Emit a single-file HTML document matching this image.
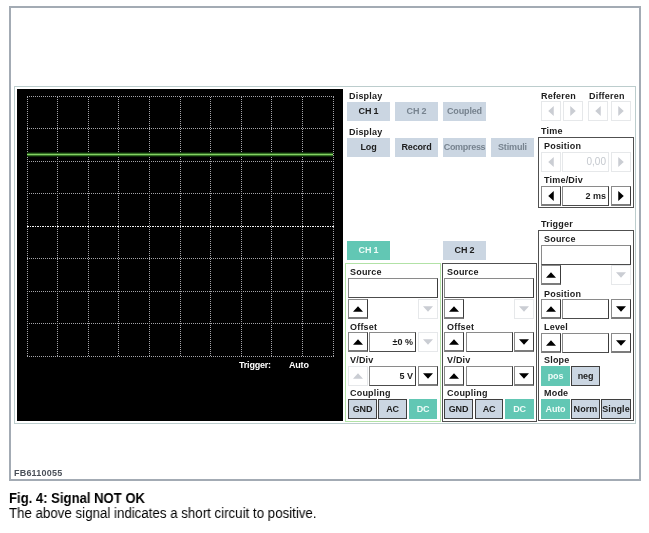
<!DOCTYPE html>
<html><head><meta charset="utf-8"><style>
html,body{margin:0;padding:0;background:#fff;}
body{width:649px;height:533px;position:relative;overflow:hidden;font-family:"Liberation Sans", sans-serif;}
div{will-change:transform}
</style></head><body>
<div style="position:absolute;left:9px;top:6px;width:632px;height:475px;box-sizing:border-box;border:2px solid #a3abb4"></div><div style="position:absolute;left:14px;top:86px;width:622px;height:338px;box-sizing:border-box;border:1px solid #bccdcd"></div><div style="position:absolute;left:17px;top:89px;width:326px;height:332px;box-sizing:border-box;background:#000"></div>
<svg style="position:absolute;left:0;top:0" width="649" height="533" viewBox="0 0 649 533"><line x1="27.5" y1="96" x2="27.5" y2="357" stroke="#a4a4a8" stroke-width="1" stroke-dasharray="1,1" stroke-dashoffset="1"/><line x1="57.5" y1="96" x2="57.5" y2="357" stroke="#a4a4a8" stroke-width="1" stroke-dasharray="1,1" stroke-dashoffset="1"/><line x1="88.5" y1="96" x2="88.5" y2="357" stroke="#a4a4a8" stroke-width="1" stroke-dasharray="1,1" stroke-dashoffset="1"/><line x1="118.5" y1="96" x2="118.5" y2="357" stroke="#a4a4a8" stroke-width="1" stroke-dasharray="1,1" stroke-dashoffset="1"/><line x1="149.5" y1="96" x2="149.5" y2="357" stroke="#a4a4a8" stroke-width="1" stroke-dasharray="1,1" stroke-dashoffset="1"/><line x1="180.5" y1="96" x2="180.5" y2="357" stroke="#a4a4a8" stroke-width="1" stroke-dasharray="1,1" stroke-dashoffset="1"/><line x1="210.5" y1="96" x2="210.5" y2="357" stroke="#a4a4a8" stroke-width="1" stroke-dasharray="1,1" stroke-dashoffset="1"/><line x1="241.5" y1="96" x2="241.5" y2="357" stroke="#a4a4a8" stroke-width="1" stroke-dasharray="1,1" stroke-dashoffset="1"/><line x1="271.5" y1="96" x2="271.5" y2="357" stroke="#a4a4a8" stroke-width="1" stroke-dasharray="1,1" stroke-dashoffset="1"/><line x1="302.5" y1="96" x2="302.5" y2="357" stroke="#a4a4a8" stroke-width="1" stroke-dasharray="1,1" stroke-dashoffset="1"/><line x1="333.5" y1="96" x2="333.5" y2="357" stroke="#a4a4a8" stroke-width="1" stroke-dasharray="1,1" stroke-dashoffset="1"/><line x1="27" y1="96.5" x2="334" y2="96.5" stroke="#a4a4a8" stroke-width="1" stroke-dasharray="1,1"/><line x1="27" y1="128.5" x2="334" y2="128.5" stroke="#a4a4a8" stroke-width="1" stroke-dasharray="1,1"/><line x1="27" y1="161.5" x2="334" y2="161.5" stroke="#a4a4a8" stroke-width="1" stroke-dasharray="1,1"/><line x1="27" y1="193.5" x2="334" y2="193.5" stroke="#a4a4a8" stroke-width="1" stroke-dasharray="1,1"/><line x1="27" y1="226.5" x2="334" y2="226.5" stroke="#f4f4f4" stroke-width="1" stroke-dasharray="2,1,1,1"/><line x1="27" y1="258.5" x2="334" y2="258.5" stroke="#a4a4a8" stroke-width="1" stroke-dasharray="1,1"/><line x1="27" y1="291.5" x2="334" y2="291.5" stroke="#a4a4a8" stroke-width="1" stroke-dasharray="1,1"/><line x1="27" y1="323.5" x2="334" y2="323.5" stroke="#a4a4a8" stroke-width="1" stroke-dasharray="1,1"/><line x1="27" y1="356.5" x2="334" y2="356.5" stroke="#a4a4a8" stroke-width="1" stroke-dasharray="1,1"/><rect x="27" y="152.5" width="306" height="4" fill="#17480f"/><rect x="27" y="153.75" width="306" height="1.5" fill="#84d262"/></svg>
<div style="position:absolute;left:238.5px;top:359.57px;line-height:10px;font-size:9px;font-weight:bold;color:#fff;white-space:nowrap;letter-spacing:-0.2px">Trigger:</div><div style="position:absolute;left:288.5px;top:359.57px;line-height:10px;font-size:9px;font-weight:bold;color:#fff;white-space:nowrap;letter-spacing:-0.2px">Auto</div><div style="position:absolute;left:349px;top:91.07px;line-height:10px;font-size:9px;font-weight:bold;color:#1c1c1c;white-space:nowrap;letter-spacing:0.2px;">Display</div><div style="position:absolute;left:347px;top:102px;width:43px;height:19px;box-sizing:border-box;background:#cbd6e2;font-size:9px;font-weight:bold;color:#1c1c1c;text-align:center;line-height:19px;letter-spacing:-0.15px;white-space:nowrap">CH 1</div><div style="position:absolute;left:395px;top:102px;width:43px;height:19px;box-sizing:border-box;background:#cbd6e2;font-size:9px;font-weight:bold;color:#77838f;text-align:center;line-height:19px;letter-spacing:-0.15px;white-space:nowrap">CH 2</div><div style="position:absolute;left:443px;top:102px;width:43px;height:19px;box-sizing:border-box;background:#cbd6e2;font-size:9px;font-weight:bold;color:#77838f;text-align:center;line-height:19px;letter-spacing:-0.15px;white-space:nowrap">Coupled</div><div style="position:absolute;left:349px;top:126.57px;line-height:10px;font-size:9px;font-weight:bold;color:#1c1c1c;white-space:nowrap;letter-spacing:0.2px;">Display</div><div style="position:absolute;left:347px;top:138px;width:43px;height:19px;box-sizing:border-box;background:#cbd6e2;font-size:9px;font-weight:bold;color:#1c1c1c;text-align:center;line-height:19px;letter-spacing:-0.15px;white-space:nowrap">Log</div><div style="position:absolute;left:395px;top:138px;width:43px;height:19px;box-sizing:border-box;background:#cbd6e2;font-size:9px;font-weight:bold;color:#1c1c1c;text-align:center;line-height:19px;letter-spacing:-0.15px;white-space:nowrap">Record</div><div style="position:absolute;left:443px;top:138px;width:43px;height:19px;box-sizing:border-box;background:#cbd6e2;font-size:9px;font-weight:bold;color:#77838f;text-align:center;line-height:19px;letter-spacing:-0.3px;white-space:nowrap">Compress</div><div style="position:absolute;left:491px;top:138px;width:43px;height:19px;box-sizing:border-box;background:#cbd6e2;font-size:9px;font-weight:bold;color:#77838f;text-align:center;line-height:19px;letter-spacing:-0.15px;white-space:nowrap">Stimuli</div><div style="position:absolute;left:541px;top:90.77px;line-height:10px;font-size:9px;font-weight:bold;color:#1c1c1c;white-space:nowrap;letter-spacing:0.2px;">Referen</div><div style="position:absolute;left:588.5px;top:90.77px;line-height:10px;font-size:9px;font-weight:bold;color:#1c1c1c;white-space:nowrap;letter-spacing:0.2px;">Differen</div><div style="position:absolute;left:541px;top:101px;width:20px;height:20px;box-sizing:border-box;border:1px solid #e6e8ea;background:#fff"></div><div style="position:absolute;left:563px;top:101px;width:20px;height:20px;box-sizing:border-box;border:1px solid #e6e8ea;background:#fff"></div><div style="position:absolute;left:588px;top:101px;width:20px;height:20px;box-sizing:border-box;border:1px solid #e6e8ea;background:#fff"></div><div style="position:absolute;left:611px;top:101px;width:20px;height:20px;box-sizing:border-box;border:1px solid #e6e8ea;background:#fff"></div><div style="position:absolute;left:541px;top:126.07px;line-height:10px;font-size:9px;font-weight:bold;color:#1c1c1c;white-space:nowrap;letter-spacing:0.2px;">Time</div><div style="position:absolute;left:538px;top:137px;width:96px;height:71px;box-sizing:border-box;border:1px solid #505050"></div><div style="position:absolute;left:544px;top:141.07px;line-height:10px;font-size:9px;font-weight:bold;color:#1c1c1c;white-space:nowrap;letter-spacing:0.2px;">Position</div><div style="position:absolute;left:541px;top:152px;width:20px;height:20px;box-sizing:border-box;border:1px solid #e6e8ea;background:#fff"></div><div style="position:absolute;left:562px;top:152px;width:47px;height:20px;box-sizing:border-box;border:1px solid #e6e8ea;background:#fff"></div><div style="position:absolute;left:562px;top:152px;width:44px;height:20px;line-height:20px;text-align:right;font-size:10px;font-weight:normal;color:#c4c8ce;white-space:nowrap">0,00</div><div style="position:absolute;left:611px;top:152px;width:20px;height:20px;box-sizing:border-box;border:1px solid #e6e8ea;background:#fff"></div><div style="position:absolute;left:544px;top:175.37px;line-height:10px;font-size:9px;font-weight:bold;color:#1c1c1c;white-space:nowrap;letter-spacing:0.2px;">Time/Div</div><div style="position:absolute;left:541px;top:186px;width:20px;height:20px;box-sizing:border-box;border:1px solid #8a8a8a;border-right-color:#3c3c3c;border-bottom:2px solid #7c7c7c;background:#fff"></div><div style="position:absolute;left:562px;top:186px;width:47px;height:20px;box-sizing:border-box;border:1px solid #8a8a8a;border-right-color:#3c3c3c;border-bottom-color:#4c4c4c;background:#fff"></div><div style="position:absolute;left:562px;top:186px;width:44px;height:20px;line-height:20px;text-align:right;font-size:9px;font-weight:bold;color:#1c1c1c;white-space:nowrap">2 ms</div><div style="position:absolute;left:611px;top:186px;width:20px;height:20px;box-sizing:border-box;border:1px solid #8a8a8a;border-right-color:#3c3c3c;border-bottom:2px solid #7c7c7c;background:#fff"></div><div style="position:absolute;left:541px;top:218.87px;line-height:10px;font-size:9px;font-weight:bold;color:#1c1c1c;white-space:nowrap;letter-spacing:0.2px;">Trigger</div><div style="position:absolute;left:538px;top:230px;width:96px;height:191px;box-sizing:border-box;border:1px solid #505050"></div><div style="position:absolute;left:544px;top:234.07px;line-height:10px;font-size:9px;font-weight:bold;color:#1c1c1c;white-space:nowrap;letter-spacing:0.2px;">Source</div><div style="position:absolute;left:541px;top:245px;width:90px;height:20px;box-sizing:border-box;border:1px solid #8a8a8a;border-right-color:#3c3c3c;border-bottom-color:#4c4c4c;background:#fff"></div><div style="position:absolute;left:541px;top:265px;width:20px;height:20px;box-sizing:border-box;border:1px solid #8a8a8a;border-right-color:#3c3c3c;border-bottom:2px solid #7c7c7c;background:#fff"></div><div style="position:absolute;left:611px;top:265px;width:20px;height:20px;box-sizing:border-box;border:1px solid #e6e8ea;background:#fff"></div><div style="position:absolute;left:544px;top:288.67px;line-height:10px;font-size:9px;font-weight:bold;color:#1c1c1c;white-space:nowrap;letter-spacing:0.2px;">Position</div><div style="position:absolute;left:541px;top:299px;width:20px;height:20px;box-sizing:border-box;border:1px solid #8a8a8a;border-right-color:#3c3c3c;border-bottom:2px solid #7c7c7c;background:#fff"></div><div style="position:absolute;left:562px;top:299px;width:47px;height:20px;box-sizing:border-box;border:1px solid #8a8a8a;border-right-color:#3c3c3c;border-bottom-color:#4c4c4c;background:#fff"></div><div style="position:absolute;left:611px;top:299px;width:20px;height:20px;box-sizing:border-box;border:1px solid #8a8a8a;border-right-color:#3c3c3c;border-bottom:2px solid #7c7c7c;background:#fff"></div><div style="position:absolute;left:544px;top:321.67px;line-height:10px;font-size:9px;font-weight:bold;color:#1c1c1c;white-space:nowrap;letter-spacing:0.2px;">Level</div><div style="position:absolute;left:541px;top:333px;width:20px;height:20px;box-sizing:border-box;border:1px solid #8a8a8a;border-right-color:#3c3c3c;border-bottom:2px solid #7c7c7c;background:#fff"></div><div style="position:absolute;left:562px;top:333px;width:47px;height:20px;box-sizing:border-box;border:1px solid #8a8a8a;border-right-color:#3c3c3c;border-bottom-color:#4c4c4c;background:#fff"></div><div style="position:absolute;left:611px;top:333px;width:20px;height:20px;box-sizing:border-box;border:1px solid #8a8a8a;border-right-color:#3c3c3c;border-bottom:2px solid #7c7c7c;background:#fff"></div><div style="position:absolute;left:544px;top:354.67px;line-height:10px;font-size:9px;font-weight:bold;color:#1c1c1c;white-space:nowrap;letter-spacing:0.2px;">Slope</div><div style="position:absolute;left:541px;top:366px;width:29px;height:20px;box-sizing:border-box;background:#62c7b4;font-size:9px;font-weight:bold;color:#effcf8;text-align:center;line-height:20px;letter-spacing:-0.15px;white-space:nowrap">pos</div><div style="position:absolute;left:571px;top:366px;width:29px;height:20px;box-sizing:border-box;background:#cbd6e2;border:1px solid #3f3f3f;font-size:9px;font-weight:bold;color:#1c1c1c;text-align:center;line-height:18px;letter-spacing:-0.15px;white-space:nowrap">neg</div><div style="position:absolute;left:544px;top:388.07px;line-height:10px;font-size:9px;font-weight:bold;color:#1c1c1c;white-space:nowrap;letter-spacing:0.2px;">Mode</div><div style="position:absolute;left:541px;top:399px;width:29px;height:20px;box-sizing:border-box;background:#62c7b4;font-size:9px;font-weight:bold;color:#effcf8;text-align:center;line-height:20px;letter-spacing:-0.15px;white-space:nowrap">Auto</div><div style="position:absolute;left:571px;top:399px;width:29px;height:20px;box-sizing:border-box;background:#cbd6e2;border:1px solid #3f3f3f;font-size:9px;font-weight:bold;color:#1c1c1c;text-align:center;line-height:18px;letter-spacing:0.1px;white-space:nowrap">Norm</div><div style="position:absolute;left:601px;top:399px;width:30px;height:20px;box-sizing:border-box;background:#cbd6e2;border:1px solid #3f3f3f;font-size:9px;font-weight:bold;color:#1c1c1c;text-align:center;line-height:18px;letter-spacing:0.1px;white-space:nowrap">Single</div><div style="position:absolute;left:347px;top:241px;width:43px;height:19px;box-sizing:border-box;background:#62c7b4;font-size:9px;font-weight:bold;color:#effcf8;text-align:center;line-height:19px;letter-spacing:-0.15px;white-space:nowrap">CH 1</div><div style="position:absolute;left:345px;top:263px;width:96px;height:159px;box-sizing:border-box;border:1px solid #b2e2a6"></div><div style="position:absolute;left:350px;top:266.87px;line-height:10px;font-size:9px;font-weight:bold;color:#1c1c1c;white-space:nowrap;letter-spacing:0.2px;">Source</div><div style="position:absolute;left:348px;top:278px;width:90px;height:20px;box-sizing:border-box;border:1px solid #8a8a8a;border-right-color:#3c3c3c;border-bottom-color:#4c4c4c;background:#fff"></div><div style="position:absolute;left:348px;top:299px;width:20px;height:20px;box-sizing:border-box;border:1px solid #8a8a8a;border-right-color:#3c3c3c;border-bottom:2px solid #7c7c7c;background:#fff"></div><div style="position:absolute;left:418px;top:299px;width:20px;height:20px;box-sizing:border-box;border:1px solid #e6e8ea;background:#fff"></div><div style="position:absolute;left:350px;top:321.77px;line-height:10px;font-size:9px;font-weight:bold;color:#1c1c1c;white-space:nowrap;letter-spacing:0.2px;">Offset</div><div style="position:absolute;left:348px;top:332px;width:20px;height:20px;box-sizing:border-box;border:1px solid #8a8a8a;border-right-color:#3c3c3c;border-bottom:2px solid #7c7c7c;background:#fff"></div><div style="position:absolute;left:369px;top:332px;width:47px;height:20px;box-sizing:border-box;border:1px solid #8a8a8a;border-right-color:#3c3c3c;border-bottom-color:#4c4c4c;background:#fff"></div><div style="position:absolute;left:369px;top:332px;width:44px;height:20px;line-height:20px;text-align:right;font-size:9px;font-weight:bold;color:#1c1c1c;white-space:nowrap">&plusmn;0 %</div><div style="position:absolute;left:418px;top:332px;width:20px;height:20px;box-sizing:border-box;border:1px solid #e6e8ea;background:#fff"></div><div style="position:absolute;left:350px;top:354.77px;line-height:10px;font-size:9px;font-weight:bold;color:#1c1c1c;white-space:nowrap;letter-spacing:0.2px;">V/Div</div><div style="position:absolute;left:348px;top:366px;width:20px;height:20px;box-sizing:border-box;border:1px solid #e6e8ea;background:#fff"></div><div style="position:absolute;left:369px;top:366px;width:47px;height:20px;box-sizing:border-box;border:1px solid #8a8a8a;border-right-color:#3c3c3c;border-bottom-color:#4c4c4c;background:#fff"></div><div style="position:absolute;left:369px;top:366px;width:44px;height:20px;line-height:20px;text-align:right;font-size:9px;font-weight:bold;color:#1c1c1c;white-space:nowrap">5 V</div><div style="position:absolute;left:418px;top:366px;width:20px;height:20px;box-sizing:border-box;border:1px solid #8a8a8a;border-right-color:#3c3c3c;border-bottom:2px solid #7c7c7c;background:#fff"></div><div style="position:absolute;left:350px;top:388.27px;line-height:10px;font-size:9px;font-weight:bold;color:#1c1c1c;white-space:nowrap;letter-spacing:0.2px;">Coupling</div><div style="position:absolute;left:348px;top:399px;width:29px;height:20px;box-sizing:border-box;background:#cbd6e2;border:1px solid #3f3f3f;font-size:9px;font-weight:bold;color:#1c1c1c;text-align:center;line-height:18px;letter-spacing:-0.15px;white-space:nowrap">GND</div><div style="position:absolute;left:378px;top:399px;width:29px;height:20px;box-sizing:border-box;background:#cbd6e2;border:1px solid #3f3f3f;font-size:9px;font-weight:bold;color:#1c1c1c;text-align:center;line-height:18px;letter-spacing:-0.15px;white-space:nowrap">AC</div><div style="position:absolute;left:409px;top:399px;width:28px;height:20px;box-sizing:border-box;background:#62c7b4;font-size:9px;font-weight:bold;color:#effcf8;text-align:center;line-height:20px;letter-spacing:-0.15px;white-space:nowrap">DC</div><div style="position:absolute;left:443px;top:241px;width:43px;height:19px;box-sizing:border-box;background:#cbd6e2;font-size:9px;font-weight:bold;color:#1c1c1c;text-align:center;line-height:19px;letter-spacing:-0.15px;white-space:nowrap">CH 2</div><div style="position:absolute;left:442px;top:263px;width:95px;height:159px;box-sizing:border-box;border:1px solid #505050"></div><div style="position:absolute;left:447px;top:266.87px;line-height:10px;font-size:9px;font-weight:bold;color:#1c1c1c;white-space:nowrap;letter-spacing:0.2px;">Source</div><div style="position:absolute;left:444px;top:278px;width:90px;height:20px;box-sizing:border-box;border:1px solid #8a8a8a;border-right-color:#3c3c3c;border-bottom-color:#4c4c4c;background:#fff"></div><div style="position:absolute;left:444px;top:299px;width:20px;height:20px;box-sizing:border-box;border:1px solid #8a8a8a;border-right-color:#3c3c3c;border-bottom:2px solid #7c7c7c;background:#fff"></div><div style="position:absolute;left:514px;top:299px;width:20px;height:20px;box-sizing:border-box;border:1px solid #e6e8ea;background:#fff"></div><div style="position:absolute;left:447px;top:321.77px;line-height:10px;font-size:9px;font-weight:bold;color:#1c1c1c;white-space:nowrap;letter-spacing:0.2px;">Offset</div><div style="position:absolute;left:444px;top:332px;width:20px;height:20px;box-sizing:border-box;border:1px solid #8a8a8a;border-right-color:#3c3c3c;border-bottom:2px solid #7c7c7c;background:#fff"></div><div style="position:absolute;left:466px;top:332px;width:47px;height:20px;box-sizing:border-box;border:1px solid #8a8a8a;border-right-color:#3c3c3c;border-bottom-color:#4c4c4c;background:#fff"></div><div style="position:absolute;left:514px;top:332px;width:20px;height:20px;box-sizing:border-box;border:1px solid #8a8a8a;border-right-color:#3c3c3c;border-bottom:2px solid #7c7c7c;background:#fff"></div><div style="position:absolute;left:447px;top:354.77px;line-height:10px;font-size:9px;font-weight:bold;color:#1c1c1c;white-space:nowrap;letter-spacing:0.2px;">V/Div</div><div style="position:absolute;left:444px;top:366px;width:20px;height:20px;box-sizing:border-box;border:1px solid #8a8a8a;border-right-color:#3c3c3c;border-bottom:2px solid #7c7c7c;background:#fff"></div><div style="position:absolute;left:466px;top:366px;width:47px;height:20px;box-sizing:border-box;border:1px solid #8a8a8a;border-right-color:#3c3c3c;border-bottom-color:#4c4c4c;background:#fff"></div><div style="position:absolute;left:514px;top:366px;width:20px;height:20px;box-sizing:border-box;border:1px solid #8a8a8a;border-right-color:#3c3c3c;border-bottom:2px solid #7c7c7c;background:#fff"></div><div style="position:absolute;left:447px;top:388.27px;line-height:10px;font-size:9px;font-weight:bold;color:#1c1c1c;white-space:nowrap;letter-spacing:0.2px;">Coupling</div><div style="position:absolute;left:444px;top:399px;width:29px;height:20px;box-sizing:border-box;background:#cbd6e2;border:1px solid #3f3f3f;font-size:9px;font-weight:bold;color:#1c1c1c;text-align:center;line-height:18px;letter-spacing:-0.15px;white-space:nowrap">GND</div><div style="position:absolute;left:475px;top:399px;width:28px;height:20px;box-sizing:border-box;background:#cbd6e2;border:1px solid #3f3f3f;font-size:9px;font-weight:bold;color:#1c1c1c;text-align:center;line-height:18px;letter-spacing:-0.15px;white-space:nowrap">AC</div><div style="position:absolute;left:505px;top:399px;width:29px;height:20px;box-sizing:border-box;background:#62c7b4;font-size:9px;font-weight:bold;color:#effcf8;text-align:center;line-height:20px;letter-spacing:-0.15px;white-space:nowrap">DC</div><div style="position:absolute;left:14px;top:468.07px;line-height:10px;font-size:9px;font-weight:bold;color:#4a5059;white-space:nowrap;letter-spacing:0.2px;">FB6110055</div><div style="position:absolute;left:9px;top:490.68px;line-height:15px;font-size:14px;font-weight:bold;color:#000;white-space:nowrap;transform:scaleX(0.935);transform-origin:0 0;">Fig. 4: Signal NOT OK</div><div style="position:absolute;left:8.5px;top:506.48px;line-height:15px;font-size:14px;font-weight:normal;color:#000;white-space:nowrap;transform:scaleX(0.95);transform-origin:0 0;">The above signal indicates a short circuit to positive.</div>
<svg style="position:absolute;left:0;top:0;pointer-events:none" width="649" height="533" viewBox="0 0 649 533"><polygon points="553.75,106.0 553.75,116.0 548.25,111.0" fill="#cacdd3"/><polygon points="570.25,106.0 570.25,116.0 575.75,111.0" fill="#cacdd3"/><polygon points="600.75,106.0 600.75,116.0 595.25,111.0" fill="#cacdd3"/><polygon points="618.25,106.0 618.25,116.0 623.75,111.0" fill="#cacdd3"/><polygon points="553.75,157.0 553.75,167.0 548.25,162.0" fill="#cacdd3"/><polygon points="618.25,157.0 618.25,167.0 623.75,162.0" fill="#cacdd3"/><polygon points="553.75,191.0 553.75,201.0 548.25,196.0" fill="#000"/><polygon points="618.25,191.0 618.25,201.0 623.75,196.0" fill="#000"/><polygon points="546.0,277.75 556.0,277.75 551.0,272.25" fill="#000"/><polygon points="616.0,272.25 626.0,272.25 621.0,277.75" fill="#cacdd3"/><polygon points="546.0,311.75 556.0,311.75 551.0,306.25" fill="#000"/><polygon points="616.0,306.25 626.0,306.25 621.0,311.75" fill="#000"/><polygon points="546.0,345.75 556.0,345.75 551.0,340.25" fill="#000"/><polygon points="616.0,340.25 626.0,340.25 621.0,345.75" fill="#000"/><polygon points="353.0,311.75 363.0,311.75 358.0,306.25" fill="#000"/><polygon points="423.0,306.25 433.0,306.25 428.0,311.75" fill="#cacdd3"/><polygon points="353.0,344.75 363.0,344.75 358.0,339.25" fill="#000"/><polygon points="423.0,339.25 433.0,339.25 428.0,344.75" fill="#cacdd3"/><polygon points="353.0,378.75 363.0,378.75 358.0,373.25" fill="#cacdd3"/><polygon points="423.0,373.25 433.0,373.25 428.0,378.75" fill="#000"/><polygon points="449.0,311.75 459.0,311.75 454.0,306.25" fill="#000"/><polygon points="519.0,306.25 529.0,306.25 524.0,311.75" fill="#cacdd3"/><polygon points="449.0,344.75 459.0,344.75 454.0,339.25" fill="#000"/><polygon points="519.0,339.25 529.0,339.25 524.0,344.75" fill="#000"/><polygon points="449.0,378.75 459.0,378.75 454.0,373.25" fill="#000"/><polygon points="519.0,373.25 529.0,373.25 524.0,378.75" fill="#000"/></svg>
</body></html>
